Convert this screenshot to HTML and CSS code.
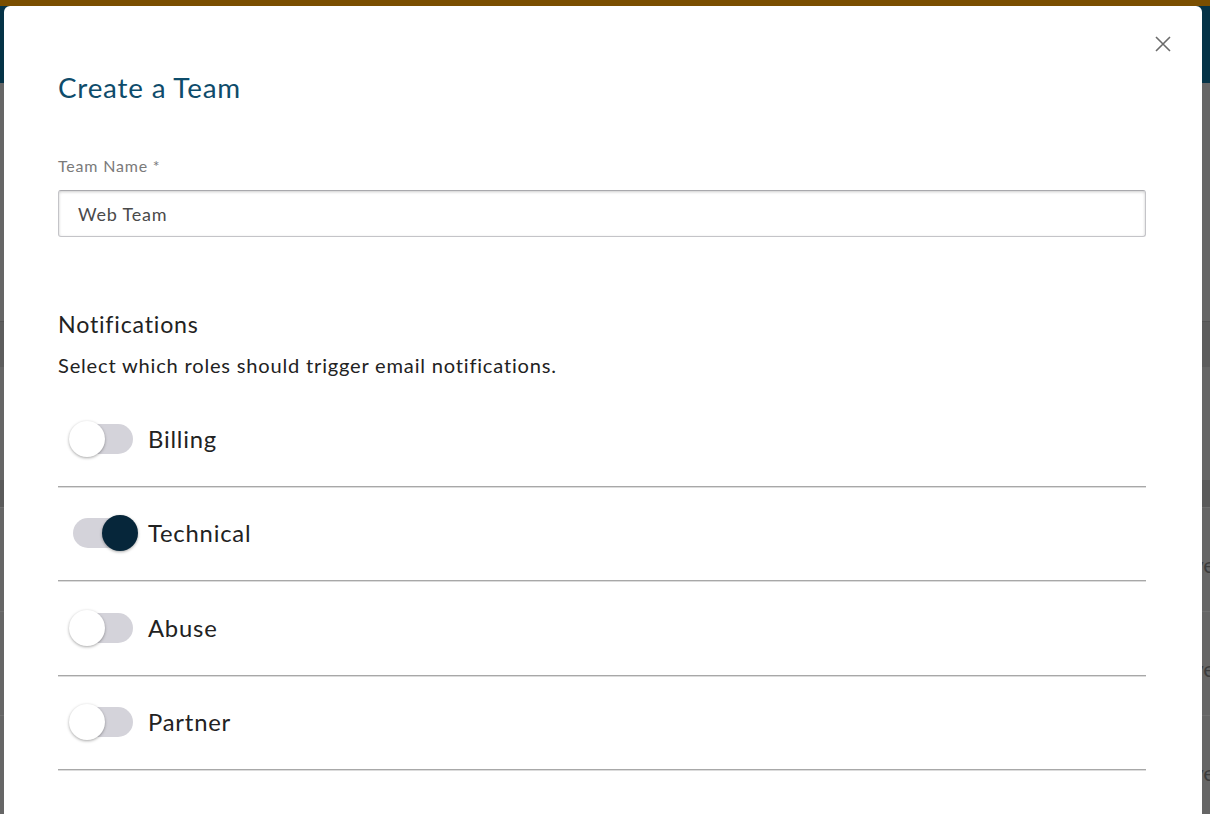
FILE: index.html
```html
<!DOCTYPE html>
<html>
<head>
<meta charset="utf-8">
<link rel="stylesheet" href="styles.css">
</head>
<body>
<div class="page">
  <div class="topbar"></div>
  <header class="header"></header>
  <main class="content">
    <div class="table">
      <div class="thead"></div>
      <div class="band"></div>
      <div class="band dark"></div>
      <div class="trow"><span>Active</span></div>
      <div class="trow"><span>Active</span></div>
      <div class="trow"><span>Active</span></div>
    </div>
  </main>
</div>

<div class="modal">
  <button class="close" aria-label="Close">
    <svg width="16" height="16" viewBox="0 0 16 16"><path d="M1 1 L15 15 M15 1 L1 15" stroke="#6b6b6b" stroke-width="1.6" fill="none"/></svg>
  </button>
  <h2 class="title">Create a Team</h2>
  <label class="field-label">Team Name *</label>
  <div class="input">Web Team</div>
  <h3 class="section-title">Notifications</h3>
  <p class="section-desc">Select which roles should trigger email notifications.</p>
  <ul class="roles">
    <li class="role"><span class="switch"><span class="track"></span><span class="knob"></span></span><span class="role-name">Billing</span></li>
    <li class="role"><span class="switch on"><span class="track"></span><span class="knob"></span></span><span class="role-name">Technical</span></li>
    <li class="role"><span class="switch"><span class="track"></span><span class="knob"></span></span><span class="role-name">Abuse</span></li>
    <li class="role"><span class="switch"><span class="track"></span><span class="knob"></span></span><span class="role-name">Partner</span></li>
  </ul>
</div>
</body>
</html>
```
FILE: styles.css
```css
* { box-sizing: border-box; }
html, body { margin: 0; padding: 0; height: 100%; overflow: hidden; }
body { font-family: "Lato", "Open Sans", sans-serif; background: #646464; letter-spacing: 0.05em; }

.page { display: flex; flex-direction: column; height: 814px; overflow: hidden; }
.topbar { flex: none; height: 6px; background: #7a4e00; }
.header { flex: none; height: 77px; background: #053347; }
.content { flex: none; background: #666666; padding-top: 238px; }
.table { display: flex; flex-direction: column; }
.thead { flex: none; height: 46px; background: #5d5d5d; border-top: 1px solid #545454; }
.band { flex: none; height: 113px; background: #666666; }
.band.dark { height: 27px; background: #5b5b5b; }
.trow { flex: none; height: 104px; border-top: 1px solid #707070; display: flex; align-items: center; justify-content: flex-end; font-size: 22px; color: #3c3c3c; overflow: hidden; letter-spacing: 0; }
.trow span { margin-right: -5px; padding-top: 10px; }

.modal {
  position: fixed; left: 4px; top: 6px; width: 1198px; height: 900px;
  background: #ffffff; border-radius: 6px;
  padding: 66px 56px 0 54px;
}
.close {
  position: absolute; top: 30px; right: 31px;
  width: 16px; height: 16px; padding: 0; border: 0; background: none; cursor: pointer;
  display: flex;
}
.title { margin: 0; font-size: 27.8px; line-height: 32px; font-weight: 400; color: #0e4c6b; }
.field-label { display: block; margin-top: 52px; font-size: 16px; line-height: 20px; color: #7a7a7a; }
.input {
  margin-top: 14px; height: 47px; border: 1px solid #c4c4c8; border-top-color: #a9a9ad; border-radius: 3px;
  box-shadow: inset 0 1px 3px rgba(0,0,0,0.2);
  padding: 0 19px; display: flex; align-items: center;
  font-size: 18px; color: #4a4a4a;
}
.section-title { margin: 73px 0 0; font-size: 23.2px; line-height: 28px; font-weight: 400; color: #222; }
.section-desc { margin: 15px 0 0; font-size: 20.1px; line-height: 24px; color: #222; }
.roles { list-style: none; margin: 15px 0 0; padding: 0; }
.role {
  height: 94.5px; display: flex; align-items: center;
  border-bottom: 1px solid #a8a8a8; box-shadow: 0 1px 0 #dcdcdc;
}
.switch { position: relative; width: 69px; height: 36px; margin-left: 11px; flex: none; }
.track { position: absolute; left: 4px; top: 3px; width: 60px; height: 30px; border-radius: 15px; background: #d4d3da; }
.knob {
  position: absolute; left: 0; top: 0; width: 36px; height: 36px; border-radius: 50%;
  background: #ffffff; box-shadow: 0 1px 3px rgba(0,0,0,0.35);
}
.switch.on .knob { left: 33px; background: #06263a; }
.role-name { margin-left: 10px; font-size: 23.8px; color: #222; }
```
